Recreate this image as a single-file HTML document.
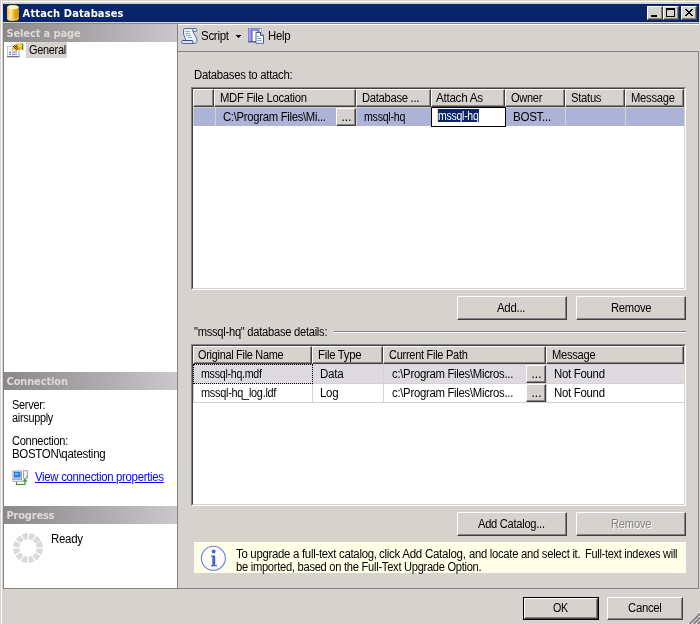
<!DOCTYPE html>
<html>
<head>
<meta charset="utf-8">
<title>Attach Databases</title>
<style>
html,body{margin:0;padding:0;}
body{width:700px;height:624px;overflow:hidden;background:#d6d3ce;position:relative;
  font-family:"Liberation Sans",sans-serif;font-size:12px;color:#000;}
.a{position:absolute;}
.t{position:absolute;white-space:nowrap;line-height:13px;height:13px;}
.hd{position:absolute;left:4px;width:173px;height:18px;
  background:linear-gradient(to right,#8a888a 0%,#acaaac 55%,#cac8ca 100%);}
.hd span{position:absolute;left:3px;top:2px;line-height:14px;font-weight:bold;color:#d8d4cc;
  font-family:"DejaVu Sans Condensed","DejaVu Sans","Liberation Sans",sans-serif;font-size:11px;white-space:nowrap;}
.btn{position:absolute;box-sizing:border-box;background:#d6d3ce;
  border-top:1px solid #fff;border-left:1px solid #fff;border-right:1px solid #424142;border-bottom:1px solid #424142;
  text-align:center;}
.btn:after{content:"";position:absolute;left:0;top:0;right:0;bottom:0;border-right:1px solid #848284;border-bottom:1px solid #848284;}
.btn span{position:relative;display:block;line-height:13px;}
.grid{position:absolute;background:#fff;}
.grid .ob{position:absolute;left:0;top:0;right:0;bottom:0;box-sizing:border-box;
  border-top:1px solid #848284;border-left:1px solid #848284;border-right:1px solid #fff;border-bottom:1px solid #fff;}
.grid .in{position:absolute;left:1px;top:1px;right:1px;bottom:1px;box-sizing:border-box;
  border-top:1px solid #424142;border-left:1px solid #424142;border-right:1px solid #d6d3ce;border-bottom:1px solid #d6d3ce;}
.hc{position:absolute;box-sizing:border-box;background:#d6d3ce;height:18px;top:2px;
  border-top:1px solid #fff;border-left:1px solid #fff;border-right:1px solid #424142;border-bottom:1px solid #424142;}
.hc:after{content:"";position:absolute;left:0;top:0;right:0;bottom:0;border-right:1px solid #848284;border-bottom:1px solid #848284;}
.hc span{position:absolute;left:5px;top:1px;line-height:13px;white-space:nowrap;}
.win{position:absolute;box-sizing:border-box;width:16px;height:14px;top:6px;background:#d6d3ce;
  border-top:1px solid #fff;border-left:1px solid #fff;border-right:1px solid #424142;border-bottom:1px solid #424142;}
.win:after{content:"";position:absolute;left:0;top:0;right:0;bottom:0;border-right:1px solid #848284;border-bottom:1px solid #848284;}
</style>
</head>
<body>
<!-- window frame -->
<div class="a" style="left:1px;top:1px;width:699px;height:1px;background:#fff"></div>
<div class="a" style="left:1px;top:1px;width:1px;height:623px;background:#fff"></div>
<!-- title bar -->
<div class="a" style="left:3px;top:4px;width:696px;height:18px;background:#08246b"></div>
<svg class="a" style="left:7px;top:5px" width="12" height="16" viewBox="0 0 12 16">
  <defs><linearGradient id="cy" x1="0" x2="1" y1="0" y2="0">
    <stop offset="0" stop-color="#f0b62c"/><stop offset="0.3" stop-color="#fdeea4"/><stop offset="0.62" stop-color="#f0aa0c"/><stop offset="1" stop-color="#c88c14"/></linearGradient></defs>
  <path d="M0 2.500 Q0 0 6 0 Q12 0 12 2.500 V13.500 Q12 16 6 16 Q0 16 0 13.500 Z" fill="url(#cy)"/>
  <ellipse cx="6" cy="2.300" rx="5.600" ry="2.100" fill="#fff2bc"/>
  <path d="M0.600 13.600 Q6 16.600 11.400 13.600" fill="none" stroke="#f8d878" stroke-width="0.700"/>
</svg>
<!-- window buttons -->
<div class="win" style="left:647px"><div class="a" style="left:3px;top:8px;width:6px;height:2px;background:#000"></div></div>
<div class="win" style="left:663px"><div class="a" style="left:2px;top:1px;width:9px;height:9px;box-sizing:border-box;border:1px solid #000;border-top:2px solid #000"></div></div>
<div class="win" style="left:681px"><svg class="a" style="left:3px;top:2px" width="8" height="7" viewBox="0 0 8 7"><path d="M0 0h2v1h1v1h2v-1h1v-1h2v1h-1v1h-1v1h-1v1h1v1h1v1h1v1h-2v-1h-1v-1h-2v1h-1v1h-2v-1h1v-1h1v-1h1v-1h-1v-1h-1v-1h-1z" fill="#000"/></svg></div>

<!-- separators under title -->
<div class="a" style="left:3px;top:23px;width:696px;height:1px;background:#848284"></div>
<div class="a" style="left:178px;top:24px;width:521px;height:1px;background:#fff"></div>

<!-- LEFT PANE -->
<div class="a" style="left:3px;top:23px;width:1px;height:566px;background:#848284"></div>
<div class="a" style="left:4px;top:24px;width:173px;height:564px;background:#fff"></div>
<div class="a" style="left:177px;top:23px;width:1px;height:566px;background:#848284"></div>
<div class="hd" style="top:24px"></div>
<div class="hd" style="top:372px"></div>
<div class="hd" style="top:506px"></div>

<!-- General item -->
<div class="a" style="left:26px;top:42px;width:41px;height:16px;background:#d6d3ce"></div>
<svg class="a" style="left:6px;top:42px" width="18" height="16" viewBox="0 0 18 16">
  <rect x="1.500" y="4.500" width="11.500" height="10" fill="#fff" stroke="#c4c4f4" stroke-width="1"/>
  <path d="M1 14.700h12.500" stroke="#6a6a6a" stroke-width="1.200"/>
  <path d="M13 9v5.500" stroke="#b4b4ec" stroke-width="1"/>
  <rect x="3" y="9.500" width="2" height="1.200" fill="#6666d6"/><rect x="6" y="9.500" width="5" height="1.200" fill="#8a8ae4"/>
  <rect x="3" y="11.700" width="2" height="1.200" fill="#6666d6"/><rect x="6" y="11.700" width="5" height="1.200" fill="#8a8ae4"/>
  <path d="M5.200 8.300 L7 4.500 L10 1.600 L13 0.900 L16 1.300 L16 7.300 L13.500 8 L11.500 8.300 L10 9.300 L8.500 7.200 L6.500 8.600 Z" fill="#f2a91a"/>
  <path d="M10 1.600 L13 0.900 L16 1.300 L16 4.500 L13 5.500 L11 4 Z" fill="#fbd24e"/>
  <path d="M5.200 8.300 L7 4.500 L8 3.700 L7.300 6.200 Z" fill="#e8c890"/>
  <path d="M8 3h1v1h-1zM10 3h1v1h-1zM7 4h1v1h-1zM9 4h1v1h-1zM11 4h1v1h-1zM8 5h1v1h-1zM10 5h1v1h-1zM9 6h1v1h-1zM11 6h1v1h-1zM10 7h1v1h-1z" fill="#4a4424"/>
  <rect x="16" y="1.400" width="1.300" height="6.800" fill="#27a327"/>
</svg>

<!-- connection icon -->
<svg class="a" style="left:12px;top:470px" width="17" height="16" viewBox="0 0 17 16">
  <rect x="1" y="1" width="8.500" height="8" fill="#d8d8e8" stroke="#8c8ca8" stroke-width="0.8"/>
  <rect x="2" y="2" width="6.500" height="5.500" fill="#1e82f0"/>
  <rect x="3" y="3" width="3" height="2" fill="#6cc0ff"/>
  <rect x="1" y="9.500" width="9" height="2" fill="#e6e6ee" stroke="#8c8ca8" stroke-width="0.6"/>
  <rect x="11.500" y="0.800" width="4" height="7.500" fill="#f2f2f6" stroke="#8c8ca8" stroke-width="0.8"/>
  <rect x="14" y="6" width="1" height="1" fill="#30b030"/>
  <path d="M4.500 12v2.500h8.500v-4" fill="none" stroke="#2a9a1a" stroke-width="1.200"/>
  <path d="M10.500 11.500L13 8.500L15.500 11.500Z" fill="#2a9a1a"/>
</svg>

<!-- Progress spinner -->
<svg class="a" style="left:13px;top:533px" width="30" height="30" viewBox="-15 -15 30 30">
  <circle cx="0" cy="0" r="11.800" fill="none" stroke="#dbd9dd" stroke-width="6.200" stroke-dasharray="4.900 1.279" transform="rotate(-26.900)"/>
</svg>

<!-- bottom line -->
<div class="a" style="left:3px;top:588px;width:696px;height:1px;background:#848284"></div>

<!-- toolbar icons -->
<svg class="a" style="left:181px;top:28px" width="17" height="16" viewBox="0 0 17 16">
  <path d="M4 0.500 H14 Q16 0.500 16 2 Q16 3.500 14 3.500 H12 L15.500 10 Q16.500 13 15.500 14.500 Q14.500 15.500 12 15.500 H2 Q0.500 15.500 0.500 14 Q0.500 12.500 2 12.500 H5 L2.500 6 V2 Q2.500 0.500 4 0.500 Z" fill="#eef2fd" stroke="#44609a" stroke-width="0.900"/>
  <path d="M12 3.500 Q11 2 12.500 0.800" fill="none" stroke="#34508a" stroke-width="0.900"/>
  <path d="M2 12.500 H11.500 Q12.600 14 11.500 15.500" fill="none" stroke="#34508a" stroke-width="1"/>
  <path d="M1.500 14 H11" stroke="#c9d6f7" stroke-width="1.200"/>
  <path d="M4 3.500h5M4 5.500h5M5 7.500h5M7 9.500h4" stroke="#82a4ee" stroke-width="0.900"/>
</svg>
<svg class="a" style="left:236px;top:35px" width="5" height="3" viewBox="0 0 5 3"><path d="M0 0h5v1h-1v1h-1v1h-1v-1h-1v-1h-1z" fill="#000"/></svg>
<svg class="a" style="left:248px;top:28px" width="17" height="16" viewBox="0 0 17 16">
  <defs><linearGradient id="bk" x1="0" x2="1" y1="0" y2="0"><stop offset="0" stop-color="#6c68c4"/><stop offset="0.5" stop-color="#b4b0f2"/><stop offset="1" stop-color="#7672cc"/></linearGradient></defs>
  <rect x="0" y="0" width="13.500" height="14.300" fill="#7e7ad4"/>
  <rect x="0" y="0" width="3.400" height="14.300" fill="url(#bk)"/>
  <rect x="3.400" y="0.500" width="9.600" height="2" fill="#8f8be4"/>
  <rect x="11.700" y="0.800" width="1.300" height="4" fill="#fff"/>
  <rect x="4.300" y="2.800" width="5.500" height="10.600" fill="#fff" stroke="#8a8aa8" stroke-width="0.700"/>
  <path d="M0.500 13.800 H8" stroke="#4a4890" stroke-width="1"/>
  <path d="M8 4.400 H12.500 L15.500 7.400 V15.300 H8 Z" fill="#fbfcff" stroke="#2a4468" stroke-width="0.850"/>
  <path d="M12.500 4.400 V7.400 H15.500" fill="#dfe8f8" stroke="#1f3a5c" stroke-width="0.900"/>
  <path d="M9.300 8.500h2M9.300 10.500h4.500M9.300 12.500h4.500" stroke="#6c8ccc" stroke-width="0.850"/>
  <path d="M8.500 14.800 H15" stroke="#c4d4f0" stroke-width="0.800"/>
</svg>

<!-- content panel border -->
<div class="a" style="left:178px;top:51px;width:521px;height:1px;background:#848284"></div>
<div class="a" style="left:698px;top:51px;width:1px;height:538px;background:#848284"></div>

<!-- GRID 1 : abs 191..685 x 87..289 -->
<div class="grid" style="left:191px;top:87px;width:495px;height:203px"><div class="ob"></div><div class="in"></div>
  <div class="hc" style="left:2px;width:21px"></div>
  <div class="hc" style="left:23px;width:142px"></div>
  <div class="hc" style="left:165px;width:75px"></div>
  <div class="hc" style="left:240px;width:74px"></div>
  <div class="hc" style="left:314px;width:60px"></div>
  <div class="hc" style="left:374px;width:60px"></div>
  <div class="hc" style="left:434px;width:59px"></div>
  <div class="a" style="left:2px;top:20px;width:491px;height:19px;background:#d6d3ce"></div>
  <div class="a" style="left:3px;top:21px;width:21px;height:18px;background:#adb3d6"></div>
  <div class="a" style="left:25px;top:21px;width:140px;height:18px;background:#adb3d6"></div>
  <div class="a" style="left:166px;top:21px;width:74px;height:18px;background:#adb3d6"></div>
  <div class="a" style="left:315px;top:21px;width:59px;height:18px;background:#adb3d6"></div>
  <div class="a" style="left:375px;top:21px;width:59px;height:18px;background:#adb3d6"></div>
  <div class="a" style="left:435px;top:21px;width:58px;height:18px;background:#adb3d6"></div>
  <div class="btn" style="left:145px;top:21px;width:20px;height:18px"></div>
  <div class="a" style="left:240px;top:20px;width:75px;height:20px;box-sizing:border-box;border:1px solid #000;background:#fff"></div>
  <div class="a" style="left:246px;top:22px;width:1px;height:13px;background:#f0e0a0"></div><div class="a" style="left:247px;top:22px;width:41px;height:13px;background:#08246b"></div>
</div>

<div class="btn" style="left:457px;top:296px;width:110px;height:24px"></div>
<div class="btn" style="left:576px;top:296px;width:110px;height:24px"></div>

<div class="a" style="left:334px;top:331px;width:352px;height:1px;background:#848284"></div>
<div class="a" style="left:334px;top:332px;width:352px;height:1px;background:#fff"></div>

<!-- GRID 2 : abs 191..685 x 344..505 -->
<div class="grid" style="left:191px;top:344px;width:495px;height:162px"><div class="ob"></div><div class="in"></div>
  <div class="hc" style="left:2px;width:119px"></div>
  <div class="hc" style="left:121px;width:71px"></div>
  <div class="hc" style="left:192px;width:163px"></div>
  <div class="hc" style="left:355px;width:138px"></div>
  <div class="a" style="left:2px;top:20px;width:491px;height:39px;background:#d6d3ce"></div>
  <div class="a" style="left:3px;top:21px;width:118px;height:18px;background:#dddbdf"></div>
  <div class="a" style="left:122px;top:21px;width:70px;height:18px;background:#dddbdf"></div>
  <div class="a" style="left:193px;top:21px;width:162px;height:18px;background:#dddbdf"></div>
  <div class="a" style="left:356px;top:21px;width:137px;height:18px;background:#dddbdf"></div>
  <div class="a" style="left:3px;top:40px;width:118px;height:18px;background:#fff"></div>
  <div class="a" style="left:122px;top:40px;width:70px;height:18px;background:#fff"></div>
  <div class="a" style="left:193px;top:40px;width:162px;height:18px;background:#fff"></div>
  <div class="a" style="left:356px;top:40px;width:137px;height:18px;background:#fff"></div>
  <div class="a" style="left:2px;top:20px;width:120px;height:20px;box-sizing:border-box;border:1px dotted #000"></div>
  <div class="btn" style="left:335px;top:21px;width:20px;height:18px"></div>
  <div class="btn" style="left:335px;top:40px;width:20px;height:18px"></div>
</div>

<div class="btn" style="left:457px;top:512px;width:110px;height:24px"></div>
<div class="btn" style="left:576px;top:512px;width:110px;height:24px"></div>

<!-- info box -->
<div class="a" style="left:194px;top:542px;width:492px;height:31px;background:#ffffe7"></div>
<svg class="a" style="left:200px;top:545px" width="27" height="27" viewBox="0 0 27 27">
  <defs><radialGradient id="ig" cx="0.4" cy="0.35" r="0.75"><stop offset="0" stop-color="#fff"/><stop offset="0.75" stop-color="#fbfbfe"/><stop offset="1" stop-color="#d4d8ea"/></radialGradient></defs>
  <circle cx="13.400" cy="13.300" r="12" fill="url(#ig)" stroke="#6284d2" stroke-width="1.100"/>
  <circle cx="13.700" cy="6.500" r="1.900" fill="#4264cc"/>
  <path d="M11 10.500h4.200v9.600h1.800v1.200h-6v-1.200h1.300v-8.400h-1.300z" fill="#4a62cc"/>
</svg>

<!-- OK / Cancel -->
<div class="a" style="left:523px;top:597px;width:76px;height:23px;box-sizing:border-box;border:1px solid #000"></div>
<div class="btn" style="left:524px;top:598px;width:74px;height:21px"></div>
<div class="btn" style="left:607px;top:597px;width:76px;height:23px"></div>

<!-- size grip -->
<svg class="a" style="left:686px;top:610px" width="14" height="14" viewBox="0 0 14 14">
  <path d="M2 14L14 2M6 14L14 6M10 14L14 10" stroke="#fff" stroke-width="1"/>
  <path d="M3.500 14L14 3.500M7.500 14L14 7.500M11.500 14L14 11.500" stroke="#848284" stroke-width="2"/>
</svg>

<!-- text -->
<div class="a" style="left:0;top:0;width:700px;height:624px;will-change:transform">
<div class="t" style="left:22.6px;top:7px;letter-spacing:0.145px;font-family:'DejaVu Sans Condensed','DejaVu Sans',sans-serif;font-size:11px;font-weight:bold;color:#fff;">Attach Databases</div>
<div class="t" style="left:6.5px;top:27px;letter-spacing:-0.131px;font-family:'DejaVu Sans Condensed','DejaVu Sans',sans-serif;font-size:11px;font-weight:bold;color:#dedbd6;">Select a page</div>
<div class="t" style="left:6.5px;top:375px;letter-spacing:-0.134px;font-family:'DejaVu Sans Condensed','DejaVu Sans',sans-serif;font-size:11px;font-weight:bold;color:#dedbd6;">Connection</div>
<div class="t" style="left:6.5px;top:509px;letter-spacing:-0.201px;font-family:'DejaVu Sans Condensed','DejaVu Sans',sans-serif;font-size:11px;font-weight:bold;color:#dedbd6;">Progress</div>
<div class="t" style="left:28.5px;top:44px;letter-spacing:-0.300px;transform:scaleX(0.9095);transform-origin:0 0;">General</div>
<div class="t" style="left:12.2px;top:399px;letter-spacing:-0.300px;transform:scaleX(0.9109);transform-origin:0 0;">Server:</div>
<div class="t" style="left:12.2px;top:412px;letter-spacing:-0.300px;transform:scaleX(0.9051);transform-origin:0 0;">airsupply</div>
<div class="t" style="left:12.3px;top:435px;letter-spacing:-0.300px;transform:scaleX(0.9206);transform-origin:0 0;">Connection:</div>
<div class="t" style="left:12.3px;top:448px;letter-spacing:-0.300px;transform:scaleX(0.9551);transform-origin:0 0;">BOSTON\qatesting</div>
<div class="t" style="left:34.6px;top:471px;letter-spacing:-0.300px;transform:scaleX(0.9459);transform-origin:0 0;color:#0000ff;text-decoration:underline;">View connection properties</div>
<div class="t" style="left:51.0px;top:533px;letter-spacing:-0.300px;transform:scaleX(0.9556);transform-origin:0 0;">Ready</div>
<div class="t" style="left:200.8px;top:30px;letter-spacing:-0.300px;transform:scaleX(0.9593);transform-origin:0 0;">Script</div>
<div class="t" style="left:268.0px;top:30px;letter-spacing:-0.300px;transform:scaleX(0.9459);transform-origin:0 0;">Help</div>
<div class="t" style="left:194.3px;top:69px;letter-spacing:-0.300px;transform:scaleX(0.9446);transform-origin:0 0;">Databases to attach:</div>
<div class="t" style="left:220.0px;top:92px;letter-spacing:-0.300px;transform:scaleX(0.9409);transform-origin:0 0;">MDF File Location</div>
<div class="t" style="left:362.4px;top:92px;letter-spacing:-0.300px;transform:scaleX(0.9346);transform-origin:0 0;">Database ...</div>
<div class="t" style="left:436.4px;top:92px;letter-spacing:-0.300px;transform:scaleX(0.9730);transform-origin:0 0;">Attach As</div>
<div class="t" style="left:511.2px;top:92px;letter-spacing:-0.300px;transform:scaleX(0.9167);transform-origin:0 0;">Owner</div>
<div class="t" style="left:571.2px;top:92px;letter-spacing:-0.300px;transform:scaleX(0.9376);transform-origin:0 0;">Status</div>
<div class="t" style="left:630.9px;top:92px;letter-spacing:-0.300px;transform:scaleX(0.9360);transform-origin:0 0;">Message</div>
<div class="t" style="left:223.1px;top:111px;letter-spacing:-0.300px;transform:scaleX(0.9388);transform-origin:0 0;">C:\Program Files\Mi...</div>
<div class="t" style="left:364.2px;top:111px;letter-spacing:-0.300px;transform:scaleX(0.8865);transform-origin:0 0;">mssql-hq</div>
<div class="t" style="left:437.8px;top:110px;letter-spacing:-0.300px;transform:scaleX(0.8758);transform-origin:0 0;color:#fff;">mssql-hq</div>
<div class="t" style="left:512.9px;top:111px;letter-spacing:-0.300px;transform:scaleX(0.9660);transform-origin:0 0;">BOST...</div>
<div class="t" style="left:341.5px;top:111px;letter-spacing:0.000px;">...</div>
<div class="t" style="left:497.4px;top:302px;letter-spacing:-0.300px;transform:scaleX(0.9545);transform-origin:0 0;">Add...</div>
<div class="t" style="left:611.0px;top:302px;letter-spacing:-0.300px;transform:scaleX(0.9378);transform-origin:0 0;">Remove</div>
<div class="t" style="left:194.1px;top:326px;letter-spacing:-0.300px;transform:scaleX(0.9325);transform-origin:0 0;">"mssql-hq" database details:</div>
<div class="t" style="left:197.9px;top:349px;letter-spacing:-0.300px;transform:scaleX(0.9080);transform-origin:0 0;">Original File Name</div>
<div class="t" style="left:317.9px;top:349px;letter-spacing:-0.300px;transform:scaleX(0.9464);transform-origin:0 0;">File Type</div>
<div class="t" style="left:389.1px;top:349px;letter-spacing:-0.300px;transform:scaleX(0.9173);transform-origin:0 0;">Current File Path</div>
<div class="t" style="left:551.9px;top:349px;letter-spacing:-0.300px;transform:scaleX(0.9296);transform-origin:0 0;">Message</div>
<div class="t" style="left:201.1px;top:368px;letter-spacing:-0.300px;transform:scaleX(0.8875);transform-origin:0 0;">mssql-hq.mdf</div>
<div class="t" style="left:319.9px;top:368px;letter-spacing:-0.300px;transform:scaleX(0.9649);transform-origin:0 0;">Data</div>
<div class="t" style="left:391.5px;top:368px;letter-spacing:-0.300px;transform:scaleX(0.9445);transform-origin:0 0;">c:\Program Files\Micros...</div>
<div class="t" style="left:531.5px;top:368px;letter-spacing:0.000px;">...</div>
<div class="t" style="left:553.9px;top:368px;letter-spacing:-0.300px;transform:scaleX(0.9507);transform-origin:0 0;">Not Found</div>
<div class="t" style="left:201.1px;top:387px;letter-spacing:-0.300px;transform:scaleX(0.9098);transform-origin:0 0;">mssql-hq_log.ldf</div>
<div class="t" style="left:319.9px;top:387px;letter-spacing:-0.300px;transform:scaleX(0.9572);transform-origin:0 0;">Log</div>
<div class="t" style="left:391.5px;top:387px;letter-spacing:-0.300px;transform:scaleX(0.9445);transform-origin:0 0;">c:\Program Files\Micros...</div>
<div class="t" style="left:531.5px;top:387px;letter-spacing:0.000px;">...</div>
<div class="t" style="left:553.9px;top:387px;letter-spacing:-0.300px;transform:scaleX(0.9507);transform-origin:0 0;">Not Found</div>
<div class="t" style="left:477.5px;top:518px;letter-spacing:-0.300px;transform:scaleX(0.9285);transform-origin:0 0;">Add Catalog...</div>
<div class="t" style="left:611.0px;top:518px;letter-spacing:-0.300px;transform:scaleX(0.9378);transform-origin:0 0;color:#848284;text-shadow:1px 1px 0 #fff;">Remove</div>
<div class="t" style="left:235.9px;top:548px;letter-spacing:-0.300px;transform:scaleX(0.9492);transform-origin:0 0;">To upgrade a full-text catalog,</div>
<div class="t" style="left:379.1px;top:548px;letter-spacing:-0.300px;transform:scaleX(0.9624);transform-origin:0 0;">click Add Catalog,</div>
<div class="t" style="left:468.9px;top:548px;letter-spacing:-0.300px;transform:scaleX(0.9387);transform-origin:0 0;">and locate and select it.</div>
<div class="t" style="left:584.6px;top:548px;letter-spacing:-0.300px;transform:scaleX(0.9152);transform-origin:0 0;">Full-text indexes will</div>
<div class="t" style="left:235.9px;top:561px;letter-spacing:-0.300px;transform:scaleX(0.9302);transform-origin:0 0;">be imported, based on the Full-Text</div>
<div class="t" style="left:404.2px;top:561px;letter-spacing:-0.300px;transform:scaleX(0.9253);transform-origin:0 0;">Upgrade Option.</div>
<div class="t" style="left:553.3px;top:602px;letter-spacing:-0.300px;transform:scaleX(0.8918);transform-origin:0 0;">OK</div>
<div class="t" style="left:628.1px;top:602px;letter-spacing:-0.300px;transform:scaleX(0.9426);transform-origin:0 0;">Cancel</div>
</div>
</body>
</html>
